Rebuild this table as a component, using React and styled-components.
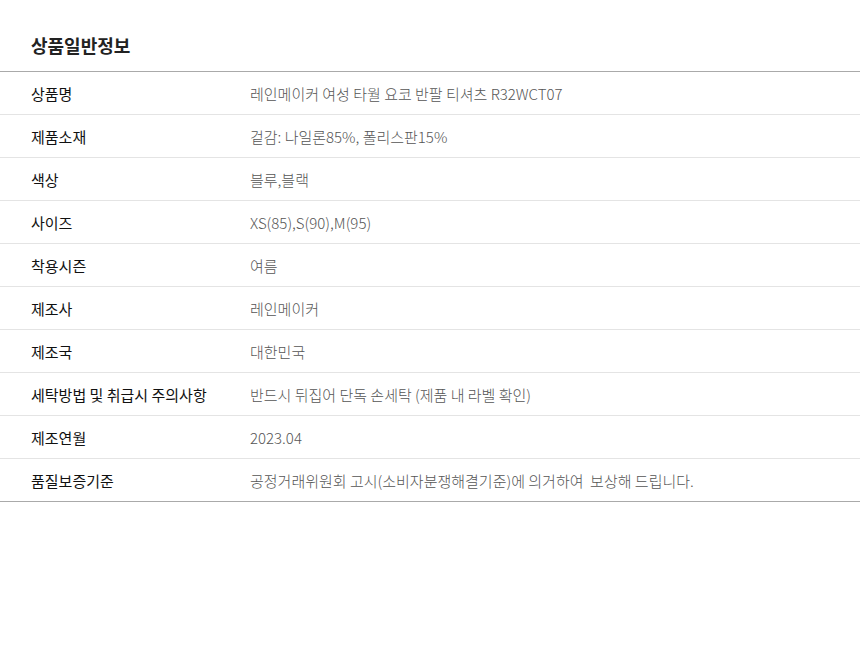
import React from "react";
import styled, { createGlobalStyle } from "styled-components";

const Global = createGlobalStyle`
  html, body { margin: 0; padding: 0; background: #fff; }
  body { font-family: "Noto Sans CJK KR", "Noto Sans", sans-serif; }
`;

const Section = styled.section`
  width: 860px;
  padding-top: 32px;
`;

const Title = styled.h2`
  margin: 0 0 13px 0;
  padding-left: 31px;
  font-size: 18px;
  line-height: 26px;
  font-weight: 700;
  color: #222;
`;

const Table = styled.div`
  border-top: 1px solid #aaa;
  border-bottom: 1px solid #aaa;
`;

const Row = styled.div`
  display: grid;
  grid-template-columns: 250px 1fr;
  height: 42px;
  align-items: center;
  border-top: ${(p) => (p.$first ? "none" : "1px solid #e4e4e4")};
`;

const Label = styled.div`
  padding-left: 31px;
  font-size: 15px;
  font-weight: 400;
  color: #111;
`;

const Value = styled.div`
  font-size: 15px;
  font-weight: 300;
  color: #555;
  white-space: pre;
`;

const rows = [
  ["상품명", "레인메이커 여성 타월 요코 반팔 티셔츠 R32WCT07"],
  ["제품소재", "겉감: 나일론85%, 폴리스판15%"],
  ["색상", "블루,블랙"],
  ["사이즈", "XS(85),S(90),M(95)"],
  ["착용시즌", "여름"],
  ["제조사", "레인메이커"],
  ["제조국", "대한민국"],
  ["세탁방법 및 취급시 주의사항", "반드시 뒤집어 단독 손세탁 (제품 내 라벨 확인)"],
  ["제조연월", "2023.04"],
  ["품질보증기준", "공정거래위원회 고시(소비자분쟁해결기준)에 의거하여  보상해 드립니다."],
];

export default function App() {
  return (
    <>
      <Global />
      <Section>
        <Title>상품일반정보</Title>
        <Table>
          {rows.map(([k, v], i) => (
            <Row key={k} $first={i === 0}>
              <Label>{k}</Label>
              <Value>{v}</Value>
            </Row>
          ))}
        </Table>
      </Section>
    </>
  );
}
